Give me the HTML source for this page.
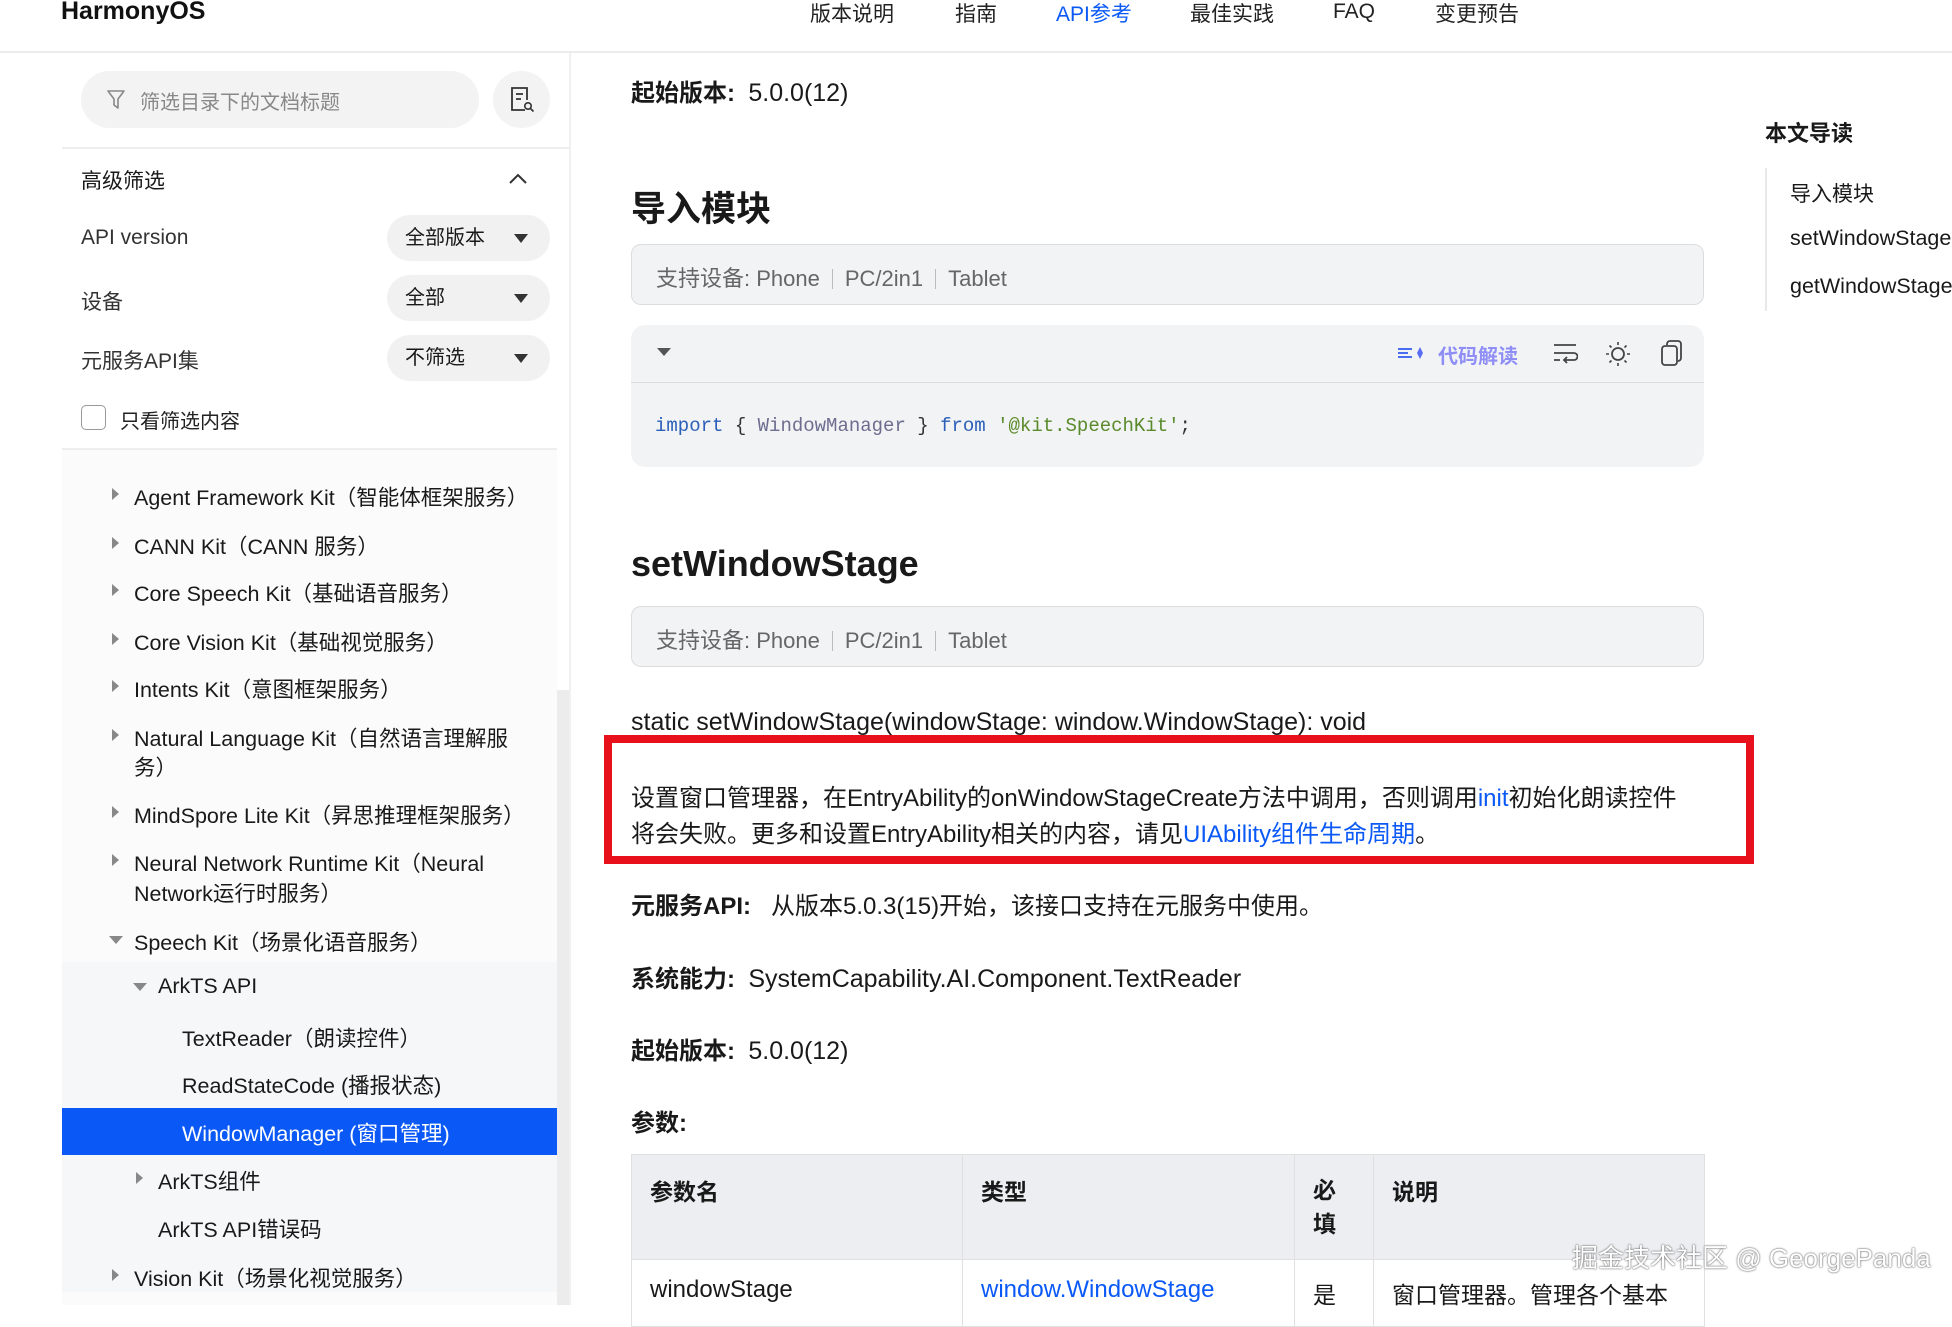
<!DOCTYPE html>
<html><head><meta charset="utf-8"><style>
*{margin:0;padding:0;box-sizing:border-box}
body{width:1952px;height:1305px;overflow:hidden;background:#fff;font-family:"Liberation Sans","Noto Sans CJK SC",sans-serif;color:#191919;position:relative}
.a{position:absolute;white-space:nowrap}
.nav{font-size:21px;color:#222;top:-2px}
.tree{font-size:21.5px;color:#191919}
.arr{position:absolute;width:0;height:0;border-top:6px solid transparent;border-bottom:6px solid transparent;border-left:7px solid #888}
.arrd{position:absolute;width:0;height:0;border-left:7px solid transparent;border-right:7px solid transparent;border-top:8px solid #888}
.box{position:absolute;background:#f1f3f5;border:1px solid #dcdcdc;border-radius:10px}
.sup{font-size:22px;color:#666}
.sup i{display:inline-block;width:1px;height:20px;background:#bbb;margin:0 12px;vertical-align:-3px}
.dd{position:absolute;left:387px;width:163px;height:46px;background:#f1f1f1;border-radius:23px;font-size:20px;line-height:46px;padding-left:18px}
.dd:after{content:"";position:absolute;right:22px;top:19px;border-left:7px solid transparent;border-right:7px solid transparent;border-top:9px solid #333}
.p{font-size:24px;color:#191919}
.q{font-size:25px}
td,th{border:1px solid #e0e0e0;text-align:left;vertical-align:top;font-size:23px}
</style></head><body>
<!-- header -->
<div class="a" style="left:61px;top:-3px;font-size:25px;font-weight:bold;color:#111">HarmonyOS</div>
<div class="a nav" style="left:810px">版本说明</div>
<div class="a nav" style="left:955px">指南</div>
<div class="a nav" style="left:1056px;color:#0a59f7">API参考</div>
<div class="a nav" style="left:1190px">最佳实践</div>
<div class="a nav" style="left:1333px;top:0">FAQ</div>
<div class="a nav" style="left:1435px">变更预告</div>
<div class="a" style="left:0;top:51px;width:1952px;height:2px;background:#ececec"></div>

<!-- sidebar -->
<div class="a" style="left:569px;top:53px;width:2px;height:1252px;background:#f0f0f0"></div>
<div class="a" style="left:81px;top:71px;width:398px;height:57px;background:#f3f3f3;border-radius:29px"></div>
<svg class="a" style="left:106px;top:89px" width="20" height="22" viewBox="0 0 20 22"><path d="M2 2h16l-6 8v9l-4-3v-6z" fill="none" stroke="#888" stroke-width="1.6" stroke-linejoin="round"/></svg>
<div class="a" style="left:140px;top:86px;font-size:20px;color:#888">筛选目录下的文档标题</div>
<div class="a" style="left:493px;top:71px;width:57px;height:57px;background:#f3f3f3;border-radius:29px"></div>
<svg class="a" style="left:508px;top:85px" width="28" height="30" viewBox="0 0 28 30"><path d="M17 25H4V3h15v12" fill="none" stroke="#333" stroke-width="1.8"/><path d="M8 9h7M8 14h5" stroke="#333" stroke-width="1.8"/><circle cx="20" cy="21" r="3.2" fill="none" stroke="#333" stroke-width="1.6"/><path d="M22.5 23.5l3 3" stroke="#333" stroke-width="1.6"/></svg>
<div class="a" style="left:62px;top:147px;width:507px;height:2px;background:#eee"></div>
<div class="a" style="left:81px;top:165px;font-size:21px">高级筛选</div>
<svg class="a" style="left:508px;top:171px" width="20" height="14"><path d="M2 12l8-8 8 8" fill="none" stroke="#333" stroke-width="2"/></svg>
<div class="a" style="left:81px;top:226px;font-size:21px;color:#333">API version</div>
<div class="dd" style="top:215px">全部版本</div>
<div class="a" style="left:81px;top:286px;font-size:21px;color:#333">设备</div>
<div class="dd" style="top:275px">全部</div>
<div class="a" style="left:81px;top:345px;font-size:21px;color:#333">元服务API集</div>
<div class="dd" style="top:335px">不筛选</div>
<div class="a" style="left:81px;top:405px;width:25px;height:25px;border:1.5px solid #999;border-radius:5px"></div>
<div class="a" style="left:120px;top:405px;font-size:20px;color:#222">只看筛选内容</div>
<div class="a" style="left:62px;top:448px;width:495px;height:857px;background:#fbfbfb;border-top:2px solid #eee"></div>
<div class="a" style="left:62px;top:962px;width:495px;height:330px;background:#f6f7f8"></div>
<div class="a" style="left:557px;top:690px;width:12px;height:615px;background:#ececec"></div>
<div class="arr" style="left:112px;top:488px"></div><div class="a tree" style="left:134px;top:481px">Agent Framework Kit（智能体框架服务）</div>
<div class="arr" style="left:112px;top:537px"></div><div class="a tree" style="left:134px;top:530px">CANN Kit（CANN 服务）</div>
<div class="arr" style="left:112px;top:584px"></div><div class="a tree" style="left:134px;top:577px">Core Speech Kit（基础语音服务）</div>
<div class="arr" style="left:112px;top:633px"></div><div class="a tree" style="left:134px;top:626px">Core Vision Kit（基础视觉服务）</div>
<div class="arr" style="left:112px;top:680px"></div><div class="a tree" style="left:134px;top:673px">Intents Kit（意图框架服务）</div>
<div class="arr" style="left:112px;top:729px"></div><div class="a tree" style="left:134px;top:722px">Natural Language Kit（自然语言理解服</div>
<div class="a tree" style="left:134px;top:751px">务）</div>
<div class="arr" style="left:112px;top:806px"></div><div class="a tree" style="left:134px;top:799px">MindSpore Lite Kit（昇思推理框架服务）</div>
<div class="arr" style="left:112px;top:854px"></div><div class="a tree" style="left:134px;top:847px">Neural Network Runtime Kit（Neural</div>
<div class="a tree" style="left:134px;top:877px">Network运行时服务）</div>
<div class="arrd" style="left:109px;top:936px"></div><div class="a tree" style="left:134px;top:926px">Speech Kit（场景化语音服务）</div>
<div class="arrd" style="left:133px;top:983px"></div><div class="a tree" style="left:158px;top:974px">ArkTS API</div>
<div class="a tree" style="left:182px;top:1022px">TextReader（朗读控件）</div>
<div class="a tree" style="left:182px;top:1069px">ReadStateCode (播报状态)</div>
<div class="a" style="left:62px;top:1108px;width:495px;height:47px;background:#0a59f7"></div>
<div class="a tree" style="left:182px;top:1117px;color:#fff">WindowManager (窗口管理)</div>
<div class="arr" style="left:136px;top:1172px"></div><div class="a tree" style="left:158px;top:1165px">ArkTS组件</div>
<div class="a tree" style="left:158px;top:1213px">ArkTS API错误码</div>
<div class="arr" style="left:112px;top:1269px"></div><div class="a tree" style="left:134px;top:1262px">Vision Kit（场景化视觉服务）</div>

<!-- main -->
<div class="a p" style="left:631px;top:73px"><b>起始版本:</b>&nbsp;&nbsp;<span class="q">5.0.0(12)</span></div>
<div class="a" style="left:631px;top:181px;font-size:35px;font-weight:bold">导入模块</div>
<div class="box" style="left:631px;top:244px;width:1073px;height:61px"></div>
<div class="a sup" style="left:656px;top:261px">支持设备: Phone<i></i>PC/2in1<i></i>Tablet</div>
<div class="box" style="left:631px;top:325px;width:1073px;height:142px;border:none;background:#f1f3f5;border-radius:14px"></div>
<div class="a" style="left:631px;top:382px;width:1073px;height:1px;background:#dcdcdc"></div>
<div class="arrd" style="left:657px;top:348px;border-top-color:#555"></div>
<svg class="a" style="left:1396px;top:344px" width="32" height="18"><path d="M2 5h14M2 9h10M2 13h14" stroke="#4a6cf0" stroke-width="2"/><path d="M24 3l3 6 -3 6 -3-6z" fill="#5a6cf2"/></svg>
<div class="a" style="left:1438px;top:340px;font-size:20px;font-weight:bold;color:#8f8ef7">代码解读</div>
<svg class="a" style="left:1552px;top:341px" width="26" height="24" viewBox="0 0 26 24"><path d="M2 4h22M2 12h20a3 3 0 0 1 0 7h-9M2 19h6" fill="none" stroke="#444" stroke-width="1.8"/><path d="M15 16l-3 3 3 3" fill="none" stroke="#444" stroke-width="1.8"/></svg>
<svg class="a" style="left:1604px;top:340px" width="28" height="28" viewBox="0 0 28 28"><circle cx="14" cy="14" r="6" fill="none" stroke="#444" stroke-width="1.8"/><path d="M14 2v3M14 23v3M2 14h3M23 14h3M5.5 5.5l2 2M20.5 20.5l2 2M5.5 22.5l2-2M20.5 7.5l2-2" stroke="#444" stroke-width="1.6"/></svg>
<svg class="a" style="left:1659px;top:339px" width="26" height="28" viewBox="0 0 26 28"><rect x="3" y="7" width="15" height="19" rx="3" fill="none" stroke="#444" stroke-width="1.8"/><path d="M8 6V5a3 3 0 0 1 3-3h8a3 3 0 0 1 3 3v14a3 3 0 0 1-3 3" fill="none" stroke="#444" stroke-width="1.8"/></svg>
<div class="a" style="left:655px;top:415px;font-family:'Liberation Mono',monospace;font-size:19px;color:#333"><span style="color:#2b5fb8">import</span> { <span style="color:#6d6d8f">WindowManager</span> } <span style="color:#2b5fb8">from</span> <span style="color:#5a8a2a">'@kit.SpeechKit'</span>;</div>
<div class="a" style="left:631px;top:543px;font-size:36px;font-weight:bold">setWindowStage</div>
<div class="box" style="left:631px;top:606px;width:1073px;height:61px"></div>
<div class="a sup" style="left:656px;top:623px">支持设备: Phone<i></i>PC/2in1<i></i>Tablet</div>
<div class="a p q" style="left:631px;top:708px">static setWindowStage(windowStage: window.WindowStage): void</div>
<div class="a" style="left:604px;top:735px;width:1150px;height:129px;border:8px solid #e8101a"></div>
<div class="a p" style="left:631px;top:778px">设置窗口管理器，在EntryAbility的onWindowStageCreate方法中调用，否则调用<span style="color:#0a59f7">init</span>初始化朗读控件</div>
<div class="a p" style="left:631px;top:814px">将会失败。更多和设置EntryAbility相关的内容，请见<span style="color:#0a59f7">UIAbility组件生命周期</span>。</div>
<div class="a p" style="left:631px;top:886px"><b>元服务API:</b>&nbsp;&nbsp;&nbsp;从版本5.0.3(15)开始，该接口支持在元服务中使用。</div>
<div class="a p" style="left:631px;top:959px"><b>系统能力:</b>&nbsp;&nbsp;<span class="q">SystemCapability.AI.Component.TextReader</span></div>
<div class="a p" style="left:631px;top:1031px"><b>起始版本:</b>&nbsp;&nbsp;<span class="q">5.0.0(12)</span></div>
<div class="a p" style="left:631px;top:1103px"><b>参数:</b></div>
<table class="a" style="left:631px;top:1154px;width:1074px;border-collapse:collapse">
<tr style="background:#eceef1;height:103px"><th style="width:331px;padding:18px 18px">参数名</th><th style="width:332px;padding:18px 18px">类型</th><th style="width:79px;padding:18px 18px;line-height:34px">必<br>填</th><th style="padding:18px 18px">说明</th></tr>
<tr style="height:60px"><td style="padding:16px 18px;font-size:24px">windowStage</td><td style="padding:16px 18px;color:#0a59f7;font-size:24px">window.WindowStage</td><td style="padding:16px 18px">是</td><td style="padding:16px 18px">窗口管理器。管理各个基本</td></tr>
</table>
<div class="a" style="left:1572px;top:1238px;font-size:26px;color:#fff;text-shadow:0 0 2px #666,0 0 1px #666">掘金技术社区 @ GeorgePanda</div>

<!-- toc -->
<div class="a" style="left:1765px;top:116px;font-size:22px;font-weight:bold">本文导读</div>
<div class="a" style="left:1765px;top:168px;width:2px;height:143px;background:#e8e8e8"></div>
<div class="a" style="left:1790px;top:178px;font-size:21px">导入模块</div>
<div class="a" style="left:1790px;top:226px;font-size:21.5px">setWindowStage</div>
<div class="a" style="left:1790px;top:274px;font-size:21.5px">getWindowStage</div>
</body></html>
